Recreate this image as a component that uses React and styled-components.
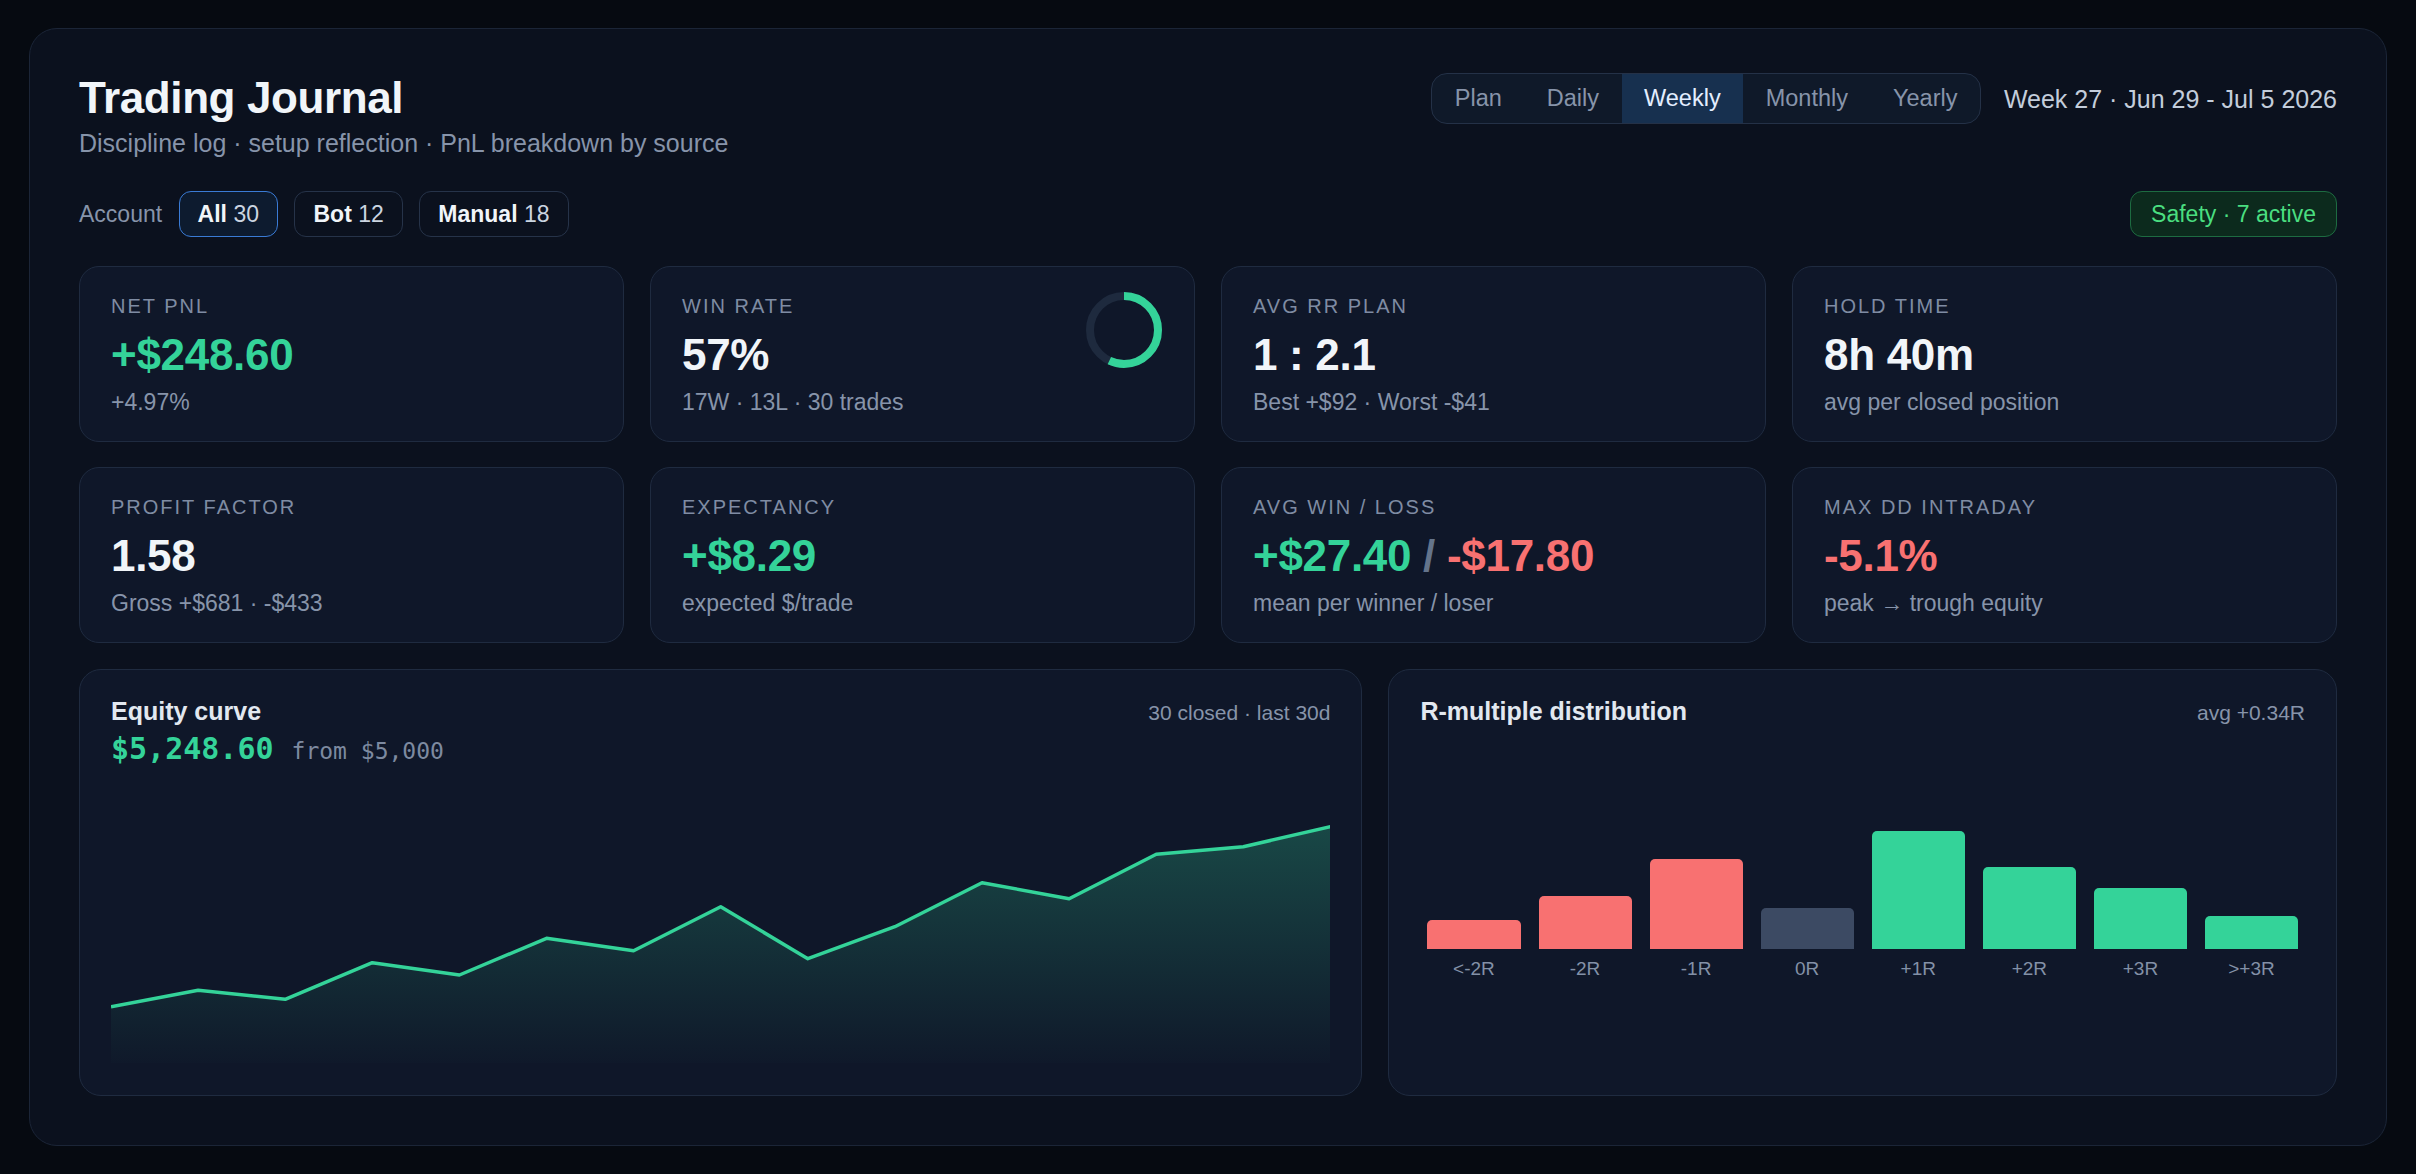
import React from "react";
import styled, { createGlobalStyle } from "styled-components";

const C = {
  page: "#060a11",
  panel: "#0b111e",
  panelBorder: "#1b2537",
  card: "#0f1729",
  cardBorder: "#1f2b40",
  text: "#f1f5f9",
  soft: "#cbd5e1",
  muted: "#8794aa",
  dim: "#64748b",
  green: "#34d399",
  red: "#f87171",
};

const GlobalStyle = createGlobalStyle`
  html, body { margin: 0; background: ${C.page}; }
  body {
    font-family: "Liberation Sans", Arial, sans-serif;
    color: ${C.text};
    -webkit-font-smoothing: antialiased;
  }
  * { box-sizing: border-box; }
`;

const Shell = styled.main`
  margin: 28px 29px 29px;
  padding: 44px 49px 49px;
  background: ${C.panel};
  border: 1.5px solid ${C.panelBorder};
  border-radius: 28px;
`;

const Header = styled.header`
  display: flex;
  justify-content: space-between;
  align-items: flex-start;
`;

const Title = styled.h1`
  margin: 0;
  font-size: 44px;
  line-height: 50.6px;
  font-weight: 700;
  letter-spacing: -0.4px;
  color: ${C.text};
`;

const Subtitle = styled.p`
  margin: 3px 0 0;
  font-size: 25px;
  line-height: 32.5px;
  color: ${C.muted};
`;

const HeadRight = styled.div`
  display: flex;
  align-items: center;
  gap: 23px;
`;

const Tabs = styled.div`
  display: flex;
  border: 1px solid #243147;
  border-radius: 16px;
  background: #0f1929;
  overflow: hidden;
`;

const Tab = styled.button`
  border: 0;
  margin: 0;
  height: 49px;
  padding: 0 22.5px;
  font-family: inherit;
  font-size: 23.5px;
  line-height: 49px;
  background: ${p => (p.$active ? "#17304f" : "transparent")};
  color: ${p => (p.$active ? "#e3eeff" : C.muted)};
  cursor: pointer;
`;

const DateText = styled.span`
  font-size: 25px;
  line-height: 30px;
  color: #c3cddb;
`;

const FilterRow = styled.div`
  margin-top: 32px;
  display: flex;
  justify-content: space-between;
  align-items: center;
`;

const Accounts = styled.div`
  display: flex;
  align-items: center;
  gap: 16.5px;
`;

const AccountLabel = styled.span`
  font-size: 23px;
  color: ${C.muted};
`;

const Chip = styled.button`
  height: 46px;
  padding: 0 18px;
  font-family: inherit;
  font-size: 23px;
  color: ${C.soft};
  background: ${p => (p.$active ? "#0d1b2f" : "transparent")};
  border: 1.5px solid ${p => (p.$active ? "#3a7bd5" : "#263349")};
  border-radius: 12px;
  cursor: pointer;
  b { color: ${C.text}; font-weight: 700; }
`;

const Safety = styled.span`
  display: inline-flex;
  align-items: center;
  height: 46px;
  padding: 0 20px;
  font-size: 23px;
  color: #4ade80;
  background: #0c2a1d;
  border: 1.5px solid #1d6b41;
  border-radius: 12px;
`;

const StatGrid = styled.section`
  margin-top: 29px;
  display: grid;
  grid-template-columns: repeat(4, 1fr);
  gap: 25px 26px;
`;

const StatCard = styled.div`
  position: relative;
  background: ${C.card};
  border: 1px solid ${C.cardBorder};
  border-radius: 20px;
  padding: 27px 31px 24px;
`;

const Label = styled.div`
  font-size: 20px;
  line-height: 24px;
  letter-spacing: 2px;
  text-transform: uppercase;
  color: #7f8ca3;
`;

const Value = styled.div`
  margin-top: 11px;
  font-size: 44px;
  line-height: 52px;
  font-weight: 700;
  letter-spacing: -0.3px;
  color: ${p => p.$color || C.text};
  .sep { color: ${C.dim}; }
`;

const Sub = styled.div`
  margin-top: 6px;
  font-size: 23px;
  line-height: 30px;
  color: ${C.muted};
`;

const DonutWrap = styled.div`
  position: absolute;
  top: 25px;
  right: 32px;
  width: 76px;
  height: 76px;
`;

const ChartGrid = styled.section`
  margin-top: 26px;
  display: grid;
  grid-template-columns: 1.353fr 1fr;
  gap: 26px;
`;

const Panel = styled.div`
  background: ${C.card};
  border: 1px solid ${C.cardBorder};
  border-radius: 22px;
  padding: 26px 31px 32px;
`;

const PanelHead = styled.div`
  display: flex;
  justify-content: space-between;
  align-items: baseline;
`;

const PanelTitle = styled.h3`
  margin: 0;
  font-size: 25px;
  line-height: 30px;
  font-weight: 700;
  color: #e2e8f0;
`;

const PanelMeta = styled.span`
  font-size: 21px;
  color: ${C.muted};
`;

const EquityRow = styled.div`
  margin-top: 3.5px;
  display: flex;
  align-items: baseline;
  gap: 18px;
  font-family: "DejaVu Sans Mono", "Liberation Mono", monospace;
`;

const BigNum = styled.span`
  font-size: 30px;
  line-height: 38px;
  font-weight: 700;
  color: ${C.green};
`;

const FromNum = styled.span`
  font-size: 23px;
  color: #7d8aa0;
`;

const ChartSvg = styled.svg`
  display: block;
  width: 100%;
  height: 295px;
`;

const Bars = styled.div`
  margin: 43px -2px 0;
  display: flex;
`;

const BarCol = styled.div`
  flex: 1;
  padding: 0 9px;
  display: flex;
  flex-direction: column;
`;

const BarWell = styled.div`
  height: 180px;
  display: flex;
  align-items: flex-end;
`;

const Bar = styled.div`
  width: 100%;
  background: ${p => p.$color};
  border-radius: 5px 5px 0 0;
`;

const BarLabel = styled.div`
  margin-top: 8px;
  font-size: 19px;
  line-height: 24px;
  text-align: center;
  color: #8391a7;
`;

const Donut = ({ pct }) => {
  const r = 34;
  const len = 2 * Math.PI * r;
  return (
    <svg width="76" height="76" viewBox="0 0 76 76">
      <circle cx="38" cy="38" r={r} fill="none" stroke="#1e2a3e" strokeWidth="8" />
      <circle
        cx="38" cy="38" r={r} fill="none" stroke={C.green} strokeWidth="8"
        strokeDasharray={`${len * pct} ${len}`}
        transform="rotate(-90 38 38)"
      />
    </svg>
  );
};

const stats = [
  { label: "Net PnL", value: "+$248.60", color: C.green, sub: "+4.97%" },
  { label: "Win rate", value: "57%", sub: "17W · 13L · 30 trades", donut: 0.57 },
  { label: "Avg RR plan", value: "1 : 2.1", sub: "Best +$92 · Worst -$41" },
  { label: "Hold time", value: "8h 40m", sub: "avg per closed position" },
  { label: "Profit factor", value: "1.58", sub: "Gross +$681 · -$433" },
  { label: "Expectancy", value: "+$8.29", color: C.green, sub: "expected $/trade" },
  {
    label: "Avg win / loss",
    value: (
      <>
        <span style={{ color: C.green }}>+$27.40</span>
        <span className="sep"> / </span>
        <span style={{ color: C.red }}>-$17.80</span>
      </>
    ),
    sub: "mean per winner / loser",
  },
  { label: "Max DD intraday", value: "-5.1%", color: C.red, sub: "peak → trough equity" },
];

// pixel y of each close on a 1219x295 canvas
const equity = [238.7, 222.3, 231.3, 194.7, 207, 170.3, 182.7, 138.7, 190.7, 158.7, 114.7, 130.7, 86.3, 78.7, 58.7];

const rBins = [
  { k: "<-2R", h: 29, c: C.red },
  { k: "-2R", h: 53, c: C.red },
  { k: "-1R", h: 90, c: C.red },
  { k: "0R", h: 41, c: "#3c4a63" },
  { k: "+1R", h: 118, c: C.green },
  { k: "+2R", h: 82, c: C.green },
  { k: "+3R", h: 61, c: C.green },
  { k: ">+3R", h: 33, c: C.green },
];

function EquityChart() {
  const W = 1219, H = 295;
  const step = W / (equity.length - 1);
  const pts = equity.map((y, i) => `${(i * step).toFixed(1)},${y}`);
  const line = "M" + pts.join(" L");
  const area = `${line} L${W},${H} L0,${H} Z`;
  return (
    <ChartSvg viewBox={`0 0 ${W} ${H}`} preserveAspectRatio="none">
      <defs>
        <linearGradient id="eqFill" x1="0" y1="0" x2="0" y2="1">
          <stop offset="0%" stopColor={C.green} stopOpacity="0.26" />
          <stop offset="100%" stopColor={C.green} stopOpacity="0.01" />
        </linearGradient>
      </defs>
      <path d={area} fill="url(#eqFill)" />
      <path d={line} fill="none" stroke={C.green} strokeWidth="3.5" strokeLinejoin="round" vectorEffect="non-scaling-stroke" />
    </ChartSvg>
  );
}

export default function App() {
  const periods = ["Plan", "Daily", "Weekly", "Monthly", "Yearly"];
  return (
    <>
      <GlobalStyle />
      <Shell>
        <Header>
          <div>
            <Title>Trading Journal</Title>
            <Subtitle>Discipline log · setup reflection · PnL breakdown by source</Subtitle>
          </div>
          <HeadRight>
            <Tabs>
              {periods.map(p => (
                <Tab key={p} $active={p === "Weekly"}>{p}</Tab>
              ))}
            </Tabs>
            <DateText>Week 27 · Jun 29 - Jul 5 2026</DateText>
          </HeadRight>
        </Header>

        <FilterRow>
          <Accounts>
            <AccountLabel>Account</AccountLabel>
            <Chip $active><b>All</b> 30</Chip>
            <Chip><b>Bot</b> 12</Chip>
            <Chip><b>Manual</b> 18</Chip>
          </Accounts>
          <Safety>Safety · 7 active</Safety>
        </FilterRow>

        <StatGrid>
          {stats.map(s => (
            <StatCard key={s.label}>
              <Label>{s.label}</Label>
              <Value $color={s.color}>{s.value}</Value>
              <Sub>{s.sub}</Sub>
              {s.donut && (
                <DonutWrap><Donut pct={s.donut} /></DonutWrap>
              )}
            </StatCard>
          ))}
        </StatGrid>

        <ChartGrid>
          <Panel>
            <PanelHead>
              <PanelTitle>Equity curve</PanelTitle>
              <PanelMeta>30 closed · last 30d</PanelMeta>
            </PanelHead>
            <EquityRow>
              <BigNum>$5,248.60</BigNum>
              <FromNum>from $5,000</FromNum>
            </EquityRow>
            <EquityChart />
          </Panel>
          <Panel>
            <PanelHead>
              <PanelTitle>R-multiple distribution</PanelTitle>
              <PanelMeta>avg +0.34R</PanelMeta>
            </PanelHead>
            <Bars>
              {rBins.map(b => (
                <BarCol key={b.k}>
                  <BarWell>
                    <Bar $color={b.c} style={{ height: b.h }} />
                  </BarWell>
                  <BarLabel>{b.k}</BarLabel>
                </BarCol>
              ))}
            </Bars>
          </Panel>
        </ChartGrid>
      </Shell>
    </>
  );
}
